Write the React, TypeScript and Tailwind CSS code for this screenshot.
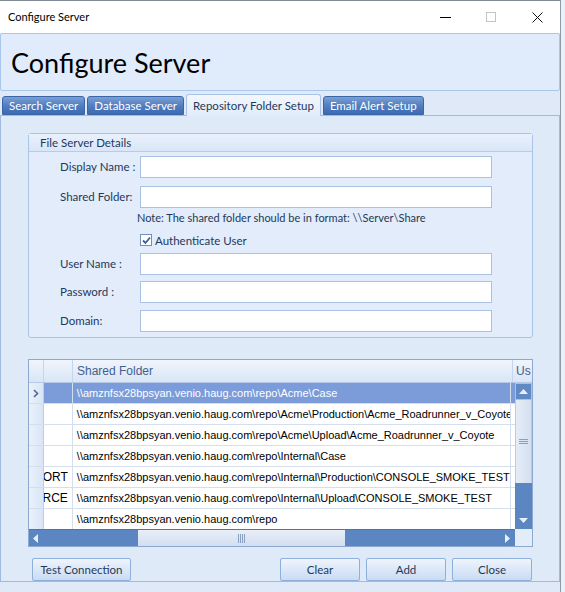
import React from "react";

const ui = { fontFamily: "Lato, 'Noto Sans', sans-serif" };
const grid = { fontFamily: "'Liberation Sans', Arial, sans-serif" };

const rows = [
  { tag: "", path: "\\\\amznfsx28bpsyan.venio.haug.com\\repo\\Acme\\Case" },
  { tag: "", path: "\\\\amznfsx28bpsyan.venio.haug.com\\repo\\Acme\\Production\\Acme_Roadrunner_v_Coyote" },
  { tag: "", path: "\\\\amznfsx28bpsyan.venio.haug.com\\repo\\Acme\\Upload\\Acme_Roadrunner_v_Coyote" },
  { tag: "", path: "\\\\amznfsx28bpsyan.venio.haug.com\\repo\\Internal\\Case" },
  { tag: "ORT", path: "\\\\amznfsx28bpsyan.venio.haug.com\\repo\\Internal\\Production\\CONSOLE_SMOKE_TEST" },
  { tag: "RCE", path: "\\\\amznfsx28bpsyan.venio.haug.com\\repo\\Internal\\Upload\\CONSOLE_SMOKE_TEST" },
  { tag: "", path: "\\\\amznfsx28bpsyan.venio.haug.com\\repo" },
];

const tabs = ["Search Server", "Database Server", "Repository Folder Setup", "Email Alert Setup"];

function Field({ label, className = "" }: { label: string; className?: string }) {
  return (
    <div className={`flex items-center ${className}`}>
      <span className="w-[111px] pl-[31px] text-[11.5px] text-[#1e395b] whitespace-nowrap">{label}</span>
      <div className="w-[352px] h-[22px] bg-white border border-[#a9c1e2]" />
    </div>
  );
}

function Btn({ children, className = "" }: { children: React.ReactNode; className?: string }) {
  return (
    <div
      className={`h-[23px] flex items-center justify-center rounded-[2px] border border-[#8db0dd] bg-gradient-to-b from-[#eef4fc] via-[#dce8f8] to-[#c9dcf4] text-[11.5px] text-[#1e395b] ${className}`}
    >
      {children}
    </div>
  );
}

export default function App() {
  return (
    <div className="w-[565px] h-[592px] bg-[#eaf0f6] overflow-hidden" style={ui}>
      <div className="w-[561px] h-[592px] bg-[#dfe9f8] border-r border-[#8e9aa8] flex flex-col">
        {/* Title bar */}
        <div className="h-[33px] bg-white flex items-center border-t border-[#7f8a96] shrink-0">
          <span className="pl-[8px] text-[11px] text-black flex-1">Configure Server</span>
          <div className="w-[46px] h-full flex items-center justify-center">
            <div className="w-[11px] h-px bg-black" />
          </div>
          <div className="w-[46px] h-full flex items-center justify-center">
            <div className="w-[10px] h-[10px] border border-[#c4c4c4]" />
          </div>
          <div className="w-[46px] h-full flex items-center justify-center">
            <svg width="11" height="11" viewBox="0 0 11 11">
              <path d="M0.5 0.5 L10.5 10.5 M10.5 0.5 L0.5 10.5" stroke="#111" strokeWidth="1" />
            </svg>
          </div>
        </div>

        {/* Header */}
        <div className="h-[58px] border border-[#aac6ea] rounded-[2px] bg-[#e0ebfb] flex items-center shrink-0">
          <span className="pl-[10px] text-[27px] text-black leading-none">Configure Server</span>
        </div>

        {/* Tabs */}
        <div className="flex items-end h-[22px] mt-[2px] pl-[2px] gap-[2px] shrink-0">
          {tabs.map((t, i) =>
            i === 2 ? (
              <div
                key={t}
                className="h-[22px] px-[6px] flex items-center rounded-t-[3px] border border-b-0 border-[#a8c3e6] bg-gradient-to-b from-[#f3f7fd] to-[#e2ecfa] text-[11.5px] text-[#1e395b] -mb-px z-10"
              >
                {t}
              </div>
            ) : (
              <div
                key={t}
                className="h-[19px] px-[6px] flex items-center rounded-t-[3px] border border-[#3a66a8] bg-gradient-to-b from-[#7aa0d4] via-[#527fc0] to-[#3c69b0] text-[11.5px] text-white"
              >
                {t}
              </div>
            )
          )}
        </div>

        {/* Tab page */}
        <div className="flex-1 border border-[#9fbbe2] bg-[#dfeaf9] flex flex-col px-[27px] pt-[17px] mb-[10px]">
          {/* Group box */}
          <div className="w-[505px] h-[205px] border border-[#a9c4e8] rounded-[3px] bg-[#e2ecfa] flex flex-col">
            <div className="h-[18px] border-b border-[#b5cceb] bg-gradient-to-b from-[#e9f1fc] to-[#d9e6f8] flex items-center pl-[11px] text-[11.5px] text-[#1e395b]">
              File Server Details
            </div>
            <Field label="Display Name :" className="mt-[4px]" />
            <Field label="Shared Folder:" className="mt-[8px]" />
            <div className="pl-[108px] mt-[2px] text-[11px] text-[#1e395b]">
              Note: The shared folder should be in format: \\Server\Share
            </div>
            <div className="pl-[111px] mt-[5px] flex items-center gap-[3px] text-[11.5px] text-[#1e395b]">
              <div className="w-[12px] h-[12px] border border-[#6f8fbf] bg-white flex items-center justify-center">
                <svg width="9" height="9" viewBox="0 0 9 9">
                  <path d="M1 4.5 L3.5 7 L8 1.5" stroke="#3b5f99" strokeWidth="1.8" fill="none" />
                </svg>
              </div>
              Authenticate User
            </div>
            <Field label="User Name :" className="mt-[4px]" />
            <Field label="Password :" className="mt-[6px]" />
            <Field label="Domain:" className="mt-[7px]" />
          </div>

          {/* Grid */}
          <div className="w-[505px] h-[188px] mt-[21px] border border-[#8ea9d0] bg-white flex flex-col text-[11px]" style={grid}>
            <div className="h-[23px] flex border-b border-[#b6c9e6] bg-gradient-to-b from-[#f0f5fc] to-[#d9e5f6] text-[#41608e] shrink-0">
              <div className="w-[15px] border-r border-[#c5d5ec]" />
              <div className="w-[29px] border-r border-[#c5d5ec]" />
              <div className="w-[440px] border-r border-[#c5d5ec] flex items-center pl-[4px] text-[12px]">Shared Folder</div>
              <div className="flex-1 flex items-center pl-[3px] overflow-hidden whitespace-nowrap text-[12px]">Us</div>
            </div>
            <div className="flex-1 flex min-h-0">
              <div className="flex-1 flex flex-col overflow-hidden">
                {rows.map((r, i) => {
                  const sel = i === 0;
                  return (
                    <div key={i} className="h-[21px] flex border-b border-[#d3dfef] shrink-0">
                      <div className="w-[15px] border-r border-[#b9cce8] bg-gradient-to-r from-[#eaf1fb] to-[#d9e5f6] flex items-center justify-center">
                        {sel && (
                          <svg width="6" height="9" viewBox="0 0 6 9">
                            <path d="M1 1 L4.5 4.5 L1 8" stroke="#4d6a93" strokeWidth="1.6" fill="none" />
                          </svg>
                        )}
                      </div>
                      <div
                        className={`w-[29px] border-r border-[#d3dfef] flex items-center justify-end pr-[4px] whitespace-nowrap overflow-hidden text-[12px] ${sel ? "bg-[#7b9bd9]" : ""}`}
                      >
                        {r.tag}
                      </div>
                      <div
                        className={`w-[440px] border-r border-[#d3dfef] flex items-center pl-[4px] whitespace-nowrap overflow-hidden ${
                          sel ? "bg-[#7b9bd9] text-white" : "text-black"
                        }`}
                      >
                        {r.path}
                      </div>
                      <div className={`w-[4px] ${sel ? "bg-[#7b9bd9]" : ""}`} />
                    </div>
                  );
                })}
              </div>
              {/* Vertical scrollbar */}
              <div className="w-[17px] flex flex-col bg-[#5b86c2]">
                <div className="h-[17px] border border-[#a9c1e2] bg-[#5f8ac6] flex items-center justify-center">
                  <svg width="9" height="5" viewBox="0 0 9 5">
                    <path d="M0 5 L4.5 0 L9 5 Z" fill="#e8f0fb" />
                  </svg>
                </div>
                <div className="h-[83px] bg-gradient-to-r from-[#e6edf7] to-[#d3dff0] border-x border-[#b9cbe6] flex items-center justify-center">
                  <svg width="9" height="6" viewBox="0 0 9 6">
                    <path d="M0 0.5 H9 M0 2.5 H9 M0 4.5 H9" stroke="#8aa0bf" strokeWidth="1" />
                  </svg>
                </div>
                <div className="flex-1 flex items-end justify-center pb-[6px]">
                  <svg width="9" height="5" viewBox="0 0 9 5">
                    <path d="M0 0 L4.5 5 L9 0 Z" fill="#e8f0fb" />
                  </svg>
                </div>
              </div>
            </div>
            {/* Horizontal scrollbar */}
            <div className="h-[17px] flex shrink-0">
              <div className="flex-1 flex bg-[#5b86c2] border-t border-[#4a74b2]">
                <div className="w-[109px] flex items-center pl-[4px]">
                  <svg width="5" height="9" viewBox="0 0 5 9">
                    <path d="M5 0 L0 4.5 L5 9 Z" fill="#e8f0fb" />
                  </svg>
                </div>
                <div className="w-[207px] bg-gradient-to-b from-[#e9eff8] to-[#d2deef] flex items-center justify-center">
                  <svg width="7" height="9" viewBox="0 0 7 9">
                    <path d="M0.5 0 V9 M2.5 0 V9 M4.5 0 V9 M6.5 0 V9" stroke="#8aa0bf" strokeWidth="1" />
                  </svg>
                </div>
                <div className="flex-1 flex items-center justify-end pr-[5px]">
                  <svg width="5" height="9" viewBox="0 0 5 9">
                    <path d="M0 0 L5 4.5 L0 9 Z" fill="#e8f0fb" />
                  </svg>
                </div>
              </div>
              <div className="w-[17px] bg-[#e3ecf9]" />
            </div>
          </div>

          {/* Buttons */}
          <div className="flex items-center mt-[11px] pl-[4px]">
            <Btn className="w-[99px]">Test Connection</Btn>
            <div className="flex-1" />
            <Btn className="w-[80px]">Clear</Btn>
            <Btn className="w-[80px] ml-[6px]">Add</Btn>
            <Btn className="w-[80px] ml-[6px]">Close</Btn>
          </div>
        </div>
      </div>
    </div>
  );
}
